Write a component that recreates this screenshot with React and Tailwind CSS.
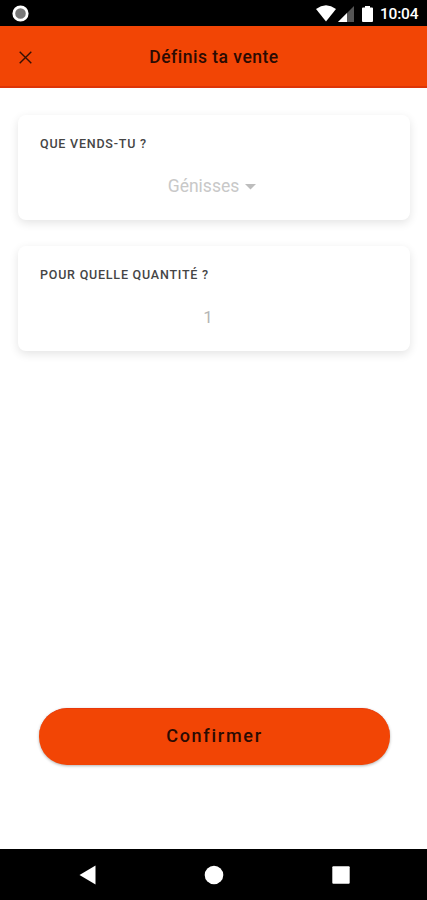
import React, { useState } from "react";

const StatusBar = () => (
  <div className="flex h-[26px] shrink-0 items-center bg-black pl-3 pr-2">
    <svg width="17" height="17" viewBox="0 0 17 17" className="mt-px">
      <circle cx="8.5" cy="8.5" r="6.7" fill="#777" stroke="#fff" strokeWidth="2.8" />
    </svg>
    <div className="ml-auto flex items-center">
      {/* Wifi */}
      <svg width="20" height="17" viewBox="0 0 20 17">
        <path d="M0 4Q10-3.4 20 4L10 16.5Z" fill="#fff" />
      </svg>
      {/* Signal */}
      <svg width="16" height="16" viewBox="0 0 16 16" className="ml-[2px] mt-px">
        <path d="M16 0V16H0Z" fill="#555" />
        <path d="M9 7V16H0Z" fill="#fff" />
      </svg>
      {/* Battery */}
      <svg width="11" height="16" viewBox="0 0 11 16" className="ml-2 mt-px">
        <path d="M3 0H8V1.5H10Q11 1.5 11 2.5V15Q11 16 10 16H1Q0 16 0 15V2.5Q0 1.5 1 1.5H3Z" fill="#fff" />
      </svg>
      <span className="ml-[7px] mt-[2px] w-[39px] whitespace-nowrap text-[15.5px] leading-5 font-medium tracking-[-0.2px] text-white">
        10:04
      </span>
    </div>
  </div>
);

const Card = ({ title, children }) => (
  <section className="h-[105px] rounded-lg bg-white px-[22px] pt-5 shadow-[0_3px_10px_rgba(0,0,0,0.11)]">
    <h2 className="text-[12.5px] leading-[18px] font-medium tracking-[0.78px] text-[#454545]">{title}</h2>
    {children}
  </section>
);

const NavBar = () => (
  <nav className="flex h-[51px] shrink-0 items-center justify-between bg-black pl-[79px] pr-[77px]">
    <button aria-label="Retour">
      <svg width="17" height="20" viewBox="0 0 17 20">
        <path d="M16.5 .5V19.5L.5 10Z" fill="#fff" />
      </svg>
    </button>
    <button aria-label="Accueil">
      <svg width="20" height="20" viewBox="0 0 20 20">
        <circle cx="10" cy="10" r="9.3" fill="#fff" />
      </svg>
    </button>
    <button aria-label="Applications">
      <svg width="18" height="18" viewBox="0 0 18 18">
        <rect x=".3" y=".3" width="17.4" height="17.4" rx="1" fill="#fff" />
      </svg>
    </button>
  </nav>
);

const App = () => {
  const [quantity, setQuantity] = useState("1");

  return (
    <div className="flex h-[900px] w-full flex-col bg-white font-[Roboto,sans-serif]">
      <StatusBar />

      {/* Header */}
      <header className="flex h-[62px] shrink-0 items-center border-b-2 border-[#dd3508] bg-[#f24505] px-[19px]">
        <button aria-label="Fermer">
          <svg width="13" height="13" viewBox="0 0 13 13" className="mt-[3px]">
            <path d="M.7.7 12.3 12.3M12.3.7.7 12.3" stroke="#351005" strokeWidth="1.4" />
          </svg>
        </button>
        <h1 className="mt-[2px] flex-1 pr-[12px] text-center text-[17.5px] leading-6 font-medium tracking-[0.5px] text-[#2b0b03]">
          Définis ta vente
        </h1>
      </header>

      <main className="flex flex-1 flex-col pb-[84px]">
        <div className="flex flex-col gap-[26px] pl-[18px] pr-[17px] pt-[27px]">
          <Card title="QUE VENDS-TU ?">
            <button className="mt-[19px] flex w-full items-center justify-center pr-[4px] text-[17.5px] leading-7 text-[#c8c8c8]">
              Génisses
              <svg width="11" height="6" viewBox="0 0 11 6" className="ml-[6px] mt-px">
                <path d="M0 0H11L5.5 5.5Z" fill="#bdbdbd" />
              </svg>
            </button>
          </Card>
          <Card title="POUR QUELLE QUANTITÉ ?">
            <input
              value={quantity}
              onChange={(e) => setQuantity(e.target.value)}
              inputMode="numeric"
              className="mt-[19px] block h-7 w-full pr-[12px] text-center text-[17px] leading-7 text-[#b5b5b5] outline-none"
            />
          </Card>
        </div>

        <button className="mt-auto ml-[39px] mr-[37px] h-[57px] rounded-[28px] border-t border-[#e8380a] bg-[#f24505] pb-[4px] text-[18px] font-medium tracking-[1.75px] text-[#2b0b03] shadow-[0_1px_3px_rgba(0,0,0,0.3)]">
          Confirmer
        </button>
      </main>

      <NavBar />
    </div>
  );
};

export default App;
